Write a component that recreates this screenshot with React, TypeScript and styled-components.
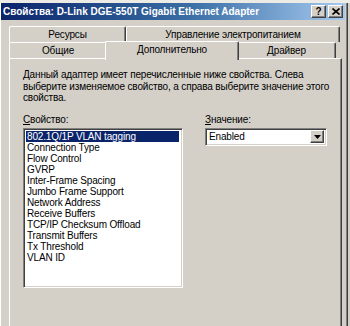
import React from "react";
import styled, { createGlobalStyle } from "styled-components";

const Global = createGlobalStyle`
  html, body { margin: 0; padding: 0; background: #d4d0c8; }
  body { width: 350px; height: 326px; overflow: hidden; }
  * { box-sizing: border-box; }
`;

const Screen = styled.div`
  width: 350px;
  height: 326px;
  overflow: hidden;
  background: #d4d0c8;
  font-family: "Liberation Sans", Arial, sans-serif;
  font-size: 10px;
  letter-spacing: -0.15px;
  color: #000;
  display: flex;
  flex-direction: column;
`;

const TopStrip = styled.div`
  height: 3px;
  background: #ecebe6;
  flex: none;
`;

const Window = styled.div`
  flex: 1;
  width: 348px;
  border-left: 1px solid #ffffff;
  border-right: 1px solid #404040;
  box-shadow: inset -1px 0 0 #808080;
  display: flex;
  flex-direction: column;
  padding: 0 2px 0 1px;
  min-height: 0;
`;

const TitleBar = styled.div`
  height: 17px;
  flex: none;
  background: linear-gradient(to right, #0a246a 0%, #3a6ea5 55%, #a6caf0 100%);
  display: flex;
  align-items: center;
  padding: 0 2px 0 2px;
  margin-left: -1px;
`;

const Title = styled.div`
  flex: 1;
  color: #fff;
  font-weight: bold;
  font-size: 10px;
  letter-spacing: 0;
  white-space: nowrap;
`;

const CaptionButton = styled.div<{ $gap?: number }>`
  width: 15px;
  height: 13px;
  margin-left: ${(p) => p.$gap ?? 0}px;
  background: #d4d0c8;
  border-top: 1px solid #ffffff;
  border-left: 1px solid #ffffff;
  border-right: 1px solid #404040;
  border-bottom: 1px solid #404040;
  box-shadow: inset -1px -1px 0 #808080;
  display: flex;
  align-items: center;
  justify-content: center;
  font-weight: bold;
  font-size: 10px;
  line-height: 1;
  color: #000;
`;

const Body = styled.div`
  flex: 1;
  display: flex;
  flex-direction: column;
  padding: 6px 5px 0 7px;
  min-height: 0;
`;

const TabRow = styled.div<{ $front?: boolean }>`
  display: flex;
  height: 16px;
  align-items: flex-end;
  position: relative;
  z-index: ${(p) => (p.$front ? 2 : 1)};
`;

const Tab = styled.div<{ $w: number; $selected?: boolean }>`
  width: ${(p) => p.$w}px;
  height: ${(p) => (p.$selected ? 19 : 16)}px;
  margin: ${(p) => (p.$selected ? "0 -2px -2px -2px" : "0")};
  background: #d4d0c8;
  border-top: 1px solid #ffffff;
  border-left: 1px solid #ffffff;
  border-right: 1px solid #404040;
  box-shadow: inset -1px 0 0 #808080;
  border-top-left-radius: 2px;
  border-top-right-radius: 2px;
  display: flex;
  align-items: center;
  justify-content: center;
  padding-bottom: ${(p) => (p.$selected ? 3 : 0)}px;
  position: relative;
  z-index: ${(p) => (p.$selected ? 3 : 1)};
  white-space: nowrap;
`;

const Panel = styled.div`
  flex: 1;
  width: 333px;
  border-top: 1px solid #ffffff;
  border-left: 1px solid #ffffff;
  border-right: 1px solid #404040;
  box-shadow: inset -1px 0 0 #808080;
  padding: 10px 4px 0 13px;
  display: flex;
  flex-direction: column;
  position: relative;
  z-index: 1;
`;

const Description = styled.p`
  margin: 0;
  line-height: 11.5px;
  width: 312px;
`;

const Columns = styled.div`
  display: flex;
  gap: 22px;
  margin-top: 10px;
`;

const Field = styled.div`
  display: flex;
  flex-direction: column;
`;

const Label = styled.div`
  line-height: 12px;
  margin-bottom: 2px;
  span { text-decoration: underline; }
`;

const ListBox = styled.div`
  width: 160px;
  height: 160px;
  background: #fff;
  border-top: 1px solid #808080;
  border-left: 1px solid #808080;
  border-right: 1px solid #ffffff;
  border-bottom: 1px solid #ffffff;
  box-shadow: inset 1px 1px 0 #404040, inset -1px -1px 0 #d4d0c8;
  padding: 2px 3px 2px 2px;
  display: flex;
  flex-direction: column;
`;

const Item = styled.div<{ $selected?: boolean }>`
  height: 11px;
  line-height: 11px;
  padding-left: 1px;
  white-space: nowrap;
  background: ${(p) => (p.$selected ? "#0a246a" : "transparent")};
  color: ${(p) => (p.$selected ? "#fff" : "#000")};
`;

const Combo = styled.div`
  width: 122px;
  height: 18px;
  background: #fff;
  border-top: 1px solid #808080;
  border-left: 1px solid #808080;
  border-right: 1px solid #ffffff;
  border-bottom: 1px solid #ffffff;
  box-shadow: inset 1px 1px 0 #404040, inset -1px -1px 0 #d4d0c8;
  display: flex;
  align-items: center;
  padding: 2px 2px 2px 3px;
`;

const ComboText = styled.div`
  flex: 1;
  line-height: 12px;
`;

const DropButton = styled.div`
  width: 14px;
  height: 13px;
  background: #d4d0c8;
  border-top: 1px solid #ffffff;
  border-left: 1px solid #ffffff;
  border-right: 1px solid #404040;
  border-bottom: 1px solid #404040;
  box-shadow: inset -1px -1px 0 #808080;
  display: flex;
  align-items: center;
  justify-content: center;
`;

const items = [
  "802.1Q/1P VLAN tagging",
  "Connection Type",
  "Flow Control",
  "GVRP",
  "Inter-Frame Spacing",
  "Jumbo Frame Support",
  "Network Address",
  "Receive Buffers",
  "TCP/IP Checksum Offload",
  "Transmit Buffers",
  "Tx Threshold",
  "VLAN ID",
];

export default function App() {
  return (
    <Screen>
      <Global />
      <TopStrip />
      <Window>
        <TitleBar>
          <Title>Свойства: D-Link DGE-550T Gigabit Ethernet Adapter</Title>
          <CaptionButton>?</CaptionButton>
          <CaptionButton $gap={2}>
            <svg width="8" height="7" viewBox="0 0 8 7">
              <path d="M0.5 0.5 L7.5 6.5 M7.5 0.5 L0.5 6.5" stroke="#000" strokeWidth="1.6" />
            </svg>
          </CaptionButton>
        </TitleBar>
        <Body>
          <TabRow>
            <Tab $w={117}>Ресурсы</Tab>
            <Tab $w={214}>Управление электропитанием</Tab>
          </TabRow>
          <TabRow $front>
            <Tab $w={98}>Общие</Tab>
            <Tab $w={134} $selected>Дополнительно</Tab>
            <Tab $w={99}>Драйвер</Tab>
          </TabRow>
          <Panel>
            <Description>
              Данный адаптер имеет перечисленные ниже свойства. Слева выберите
              изменяемое свойство, а справа выберите значение этого свойства.
            </Description>
            <Columns>
              <Field>
                <Label>
                  <span>С</span>войство:
                </Label>
                <ListBox>
                  {items.map((it, i) => (
                    <Item key={it} $selected={i === 0}>
                      {it}
                    </Item>
                  ))}
                </ListBox>
              </Field>
              <Field>
                <Label>
                  <span>З</span>начение:
                </Label>
                <Combo>
                  <ComboText>Enabled</ComboText>
                  <DropButton>
                    <svg width="7" height="4" viewBox="0 0 7 4">
                      <path d="M0 0 H7 L3.5 4 Z" fill="#000" />
                    </svg>
                  </DropButton>
                </Combo>
              </Field>
            </Columns>
          </Panel>
        </Body>
      </Window>
    </Screen>
  );
}
